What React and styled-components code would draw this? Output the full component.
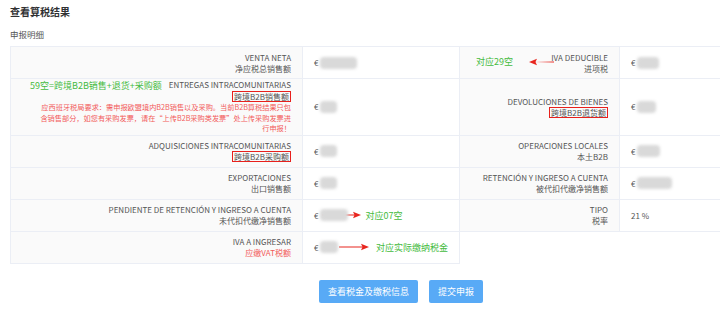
import React from "react";
import styled, { createGlobalStyle } from "styled-components";

const GlobalStyle = createGlobalStyle`
  body {
    margin: 0;
    background: #fff;
    overflow: hidden;
    font-family: "Noto Sans CJK SC", "Liberation Sans", sans-serif;
  }
`;

const Page = styled.div`
  width: 720px;
  height: 311px;
  overflow: hidden;
  padding: 5px 0 0 10px;
  box-sizing: border-box;
`;

const Title = styled.h3`
  margin: 0;
  font-size: 10px;
  line-height: 14px;
  font-weight: bold;
  color: #303133;
`;

const SubTitle = styled.div`
  margin-top: 9px;
  font-size: 8.5px;
  line-height: 12px;
  color: #555;
`;

const Table = styled.table`
  margin-top: 6px;
  width: 776px;
  border-collapse: collapse;
  table-layout: fixed;
  font-size: 8px;
  line-height: 11px;
  color: #555;
`;

const Row = styled.tr`
  height: ${(p) => p.$h || 32}px;
`;

const Label = styled.td`
  position: relative;
  background: #fafafa;
  border: 1px solid #ebeef5;
  text-align: right;
  padding: ${(p) => (p.$tight ? "1px 11px" : "0 11px")};
  vertical-align: middle;
  line-height: ${(p) => (p.$tight ? "10.6px" : "11px")};
`;

const Value = styled.td`
  border: 1px solid #ebeef5;
  padding: 0 11px;
  vertical-align: middle;
`;

const Empty = styled.td``;

const Boxed = styled.span`
  display: inline-block;
  border: 1px solid #e8201c;
  padding: 0 1px;
  line-height: 9px;
`;

const Notice = styled.div`
  color: #f25b5b;
  text-align: right;
  white-space: nowrap;
  font-size: ${(p) => p.$size || 8}px;
`;

const Green = styled.span`
  color: #45bb3e;
  font-size: ${(p) => p.$size || 9}px;
  white-space: nowrap;
`;

const Overlay = styled.div`
  position: absolute;
  left: ${(p) => p.$left}px;
  top: ${(p) => p.$top}px;
  display: flex;
  align-items: center;
`;

const Money = styled.div`
  display: flex;
  align-items: center;
  white-space: nowrap;
`;

const Blur = styled.span`
  display: inline-block;
  width: ${(p) => p.$w}px;
  height: 12px;
  margin-left: 2px;
  background: #d9d9d9;
  border-radius: 4px;
  filter: blur(1.6px);
`;

const ArrowSvg = styled.svg`
  flex: none;
  margin-left: ${(p) => p.$ml || 0}px;
  margin-right: ${(p) => p.$mr || 0}px;
`;

const Spacer = styled.span`
  width: ${(p) => p.$w}px;
`;

const Buttons = styled.div`
  display: flex;
  gap: 11px;
  margin: 16px 0 0 309px;
`;

const Button = styled.button`
  height: 23px;
  padding: 0 ${(p) => p.$pad}px;
  border: none;
  border-radius: 2px;
  background: #58aaf6;
  color: #fff;
  font-family: inherit;
  font-size: 9px;
`;

const Arrow = ({ w, left, ml, mr }) => (
  <ArrowSvg width={w} height="8" viewBox={`0 0 ${w} 8`} $ml={ml} $mr={mr}>
    {left ? (
      <>
        <path d={`M6 4 L${w} 3.4 L${w} 4.4 Z`} fill="#e8261f" />
        <path d="M0 4 L8 0.8 L6.5 4 L8 7.2 Z" fill="#e8261f" />
      </>
    ) : (
      <>
        <path d={`M0 3.4 L${w - 6} 3.6 L${w - 6} 4.4 L0 4.6 Z`} fill="#e8261f" />
        <path d={`M${w} 4 L${w - 8} 0.8 L${w - 6.5} 4 L${w - 8} 7.2 Z`} fill="#e8261f" />
      </>
    )}
  </ArrowSvg>
);

const Amount = ({ w }) => (
  <Money>
    €<Blur $w={w} />
  </Money>
);

export default function App() {
  return (
    <Page>
      <GlobalStyle />
      <Title>查看算税结果</Title>
      <SubTitle>申报明细</SubTitle>
      <Table>
        <colgroup>
          <col style={{ width: 292 }} />
          <col style={{ width: 157 }} />
          <col style={{ width: 160 }} />
          <col />
        </colgroup>
        <tbody>
          <Row>
            <Label>
              VENTA NETA
              <br />
              净应税总销售额
            </Label>
            <Value>
              <Amount w={37} />
            </Value>
            <Label>
              <Overlay $left={16} $top={9}>
                <Green>对应29空</Green>
                <Spacer $w={16} />
                <Arrow w={25} left />
              </Overlay>
              IVA DEDUCIBLE
              <br />
              进项税
            </Label>
            <Value>
              <Amount w={22} />
            </Value>
          </Row>
          <Row $h={56}>
            <Label $tight>
              <Overlay $left={19} $top={2}>
                <Green $size={9}>59空=跨境B2B销售+退货+采购额</Green>
              </Overlay>
              ENTREGAS INTRACOMUNITARIAS
              <br />
              <Boxed>跨境B2B销售额</Boxed>
              <Notice $size={7.2}>
                应西班牙税局要求：需申报欧盟境内B2B销售以及采购。当前B2B算税结果只包
                <br />
                含销售部分，如您有采购发票，请在“上传B2B采购类发票”处上传采购发票进
                <br />
                行申报！
              </Notice>
            </Label>
            <Value>
              <Amount w={17} />
            </Value>
            <Label>
              DEVOLUCIONES DE BIENES
              <br />
              <Boxed>跨境B2B退货额</Boxed>
            </Label>
            <Value>
              <Amount w={19} />
            </Value>
          </Row>
          <Row>
            <Label>
              ADQUISICIONES INTRACOMUNITARIAS
              <br />
              <Boxed>跨境B2B采购额</Boxed>
            </Label>
            <Value>
              <Amount w={17} />
            </Value>
            <Label>
              OPERACIONES LOCALES
              <br />
              本土B2B
            </Label>
            <Value>
              <Amount w={23} />
            </Value>
          </Row>
          <Row>
            <Label>
              EXPORTACIONES
              <br />
              出口销售额
            </Label>
            <Value>
              <Amount w={17} />
            </Value>
            <Label>
              RETENCIÓN Y INGRESO A CUENTA
              <br />
              被代扣代缴净销售额
            </Label>
            <Value>
              <Amount w={35} />
            </Value>
          </Row>
          <Row>
            <Label>
              PENDIENTE DE RETENCIÓN Y INGRESO A CUENTA
              <br />
              未代扣代缴净销售额
            </Label>
            <Value>
              <Money>
                €<Blur $w={28} />
                <Arrow w={39} ml={-26} mr={4} />
                <Green>对应07空</Green>
              </Money>
            </Value>
            <Label>
              TIPO
              <br />
              税率
            </Label>
            <Value>21 %</Value>
          </Row>
          <Row>
            <Label>
              IVA A INGRESAR
              <br />
              <Notice as="span">应缴VAT税额</Notice>
            </Label>
            <Value>
              <Money>
                €<Blur $w={24} />
                <Arrow w={30} ml={1} mr={7} />
                <Green>对应实际缴纳税金</Green>
              </Money>
            </Value>
            <Empty />
            <Empty />
          </Row>
        </tbody>
      </Table>
      <Buttons>
        <Button $pad={9}>查看税金及缴税信息</Button>
        <Button $pad={9}>提交申报</Button>
      </Buttons>
    </Page>
  );
}
